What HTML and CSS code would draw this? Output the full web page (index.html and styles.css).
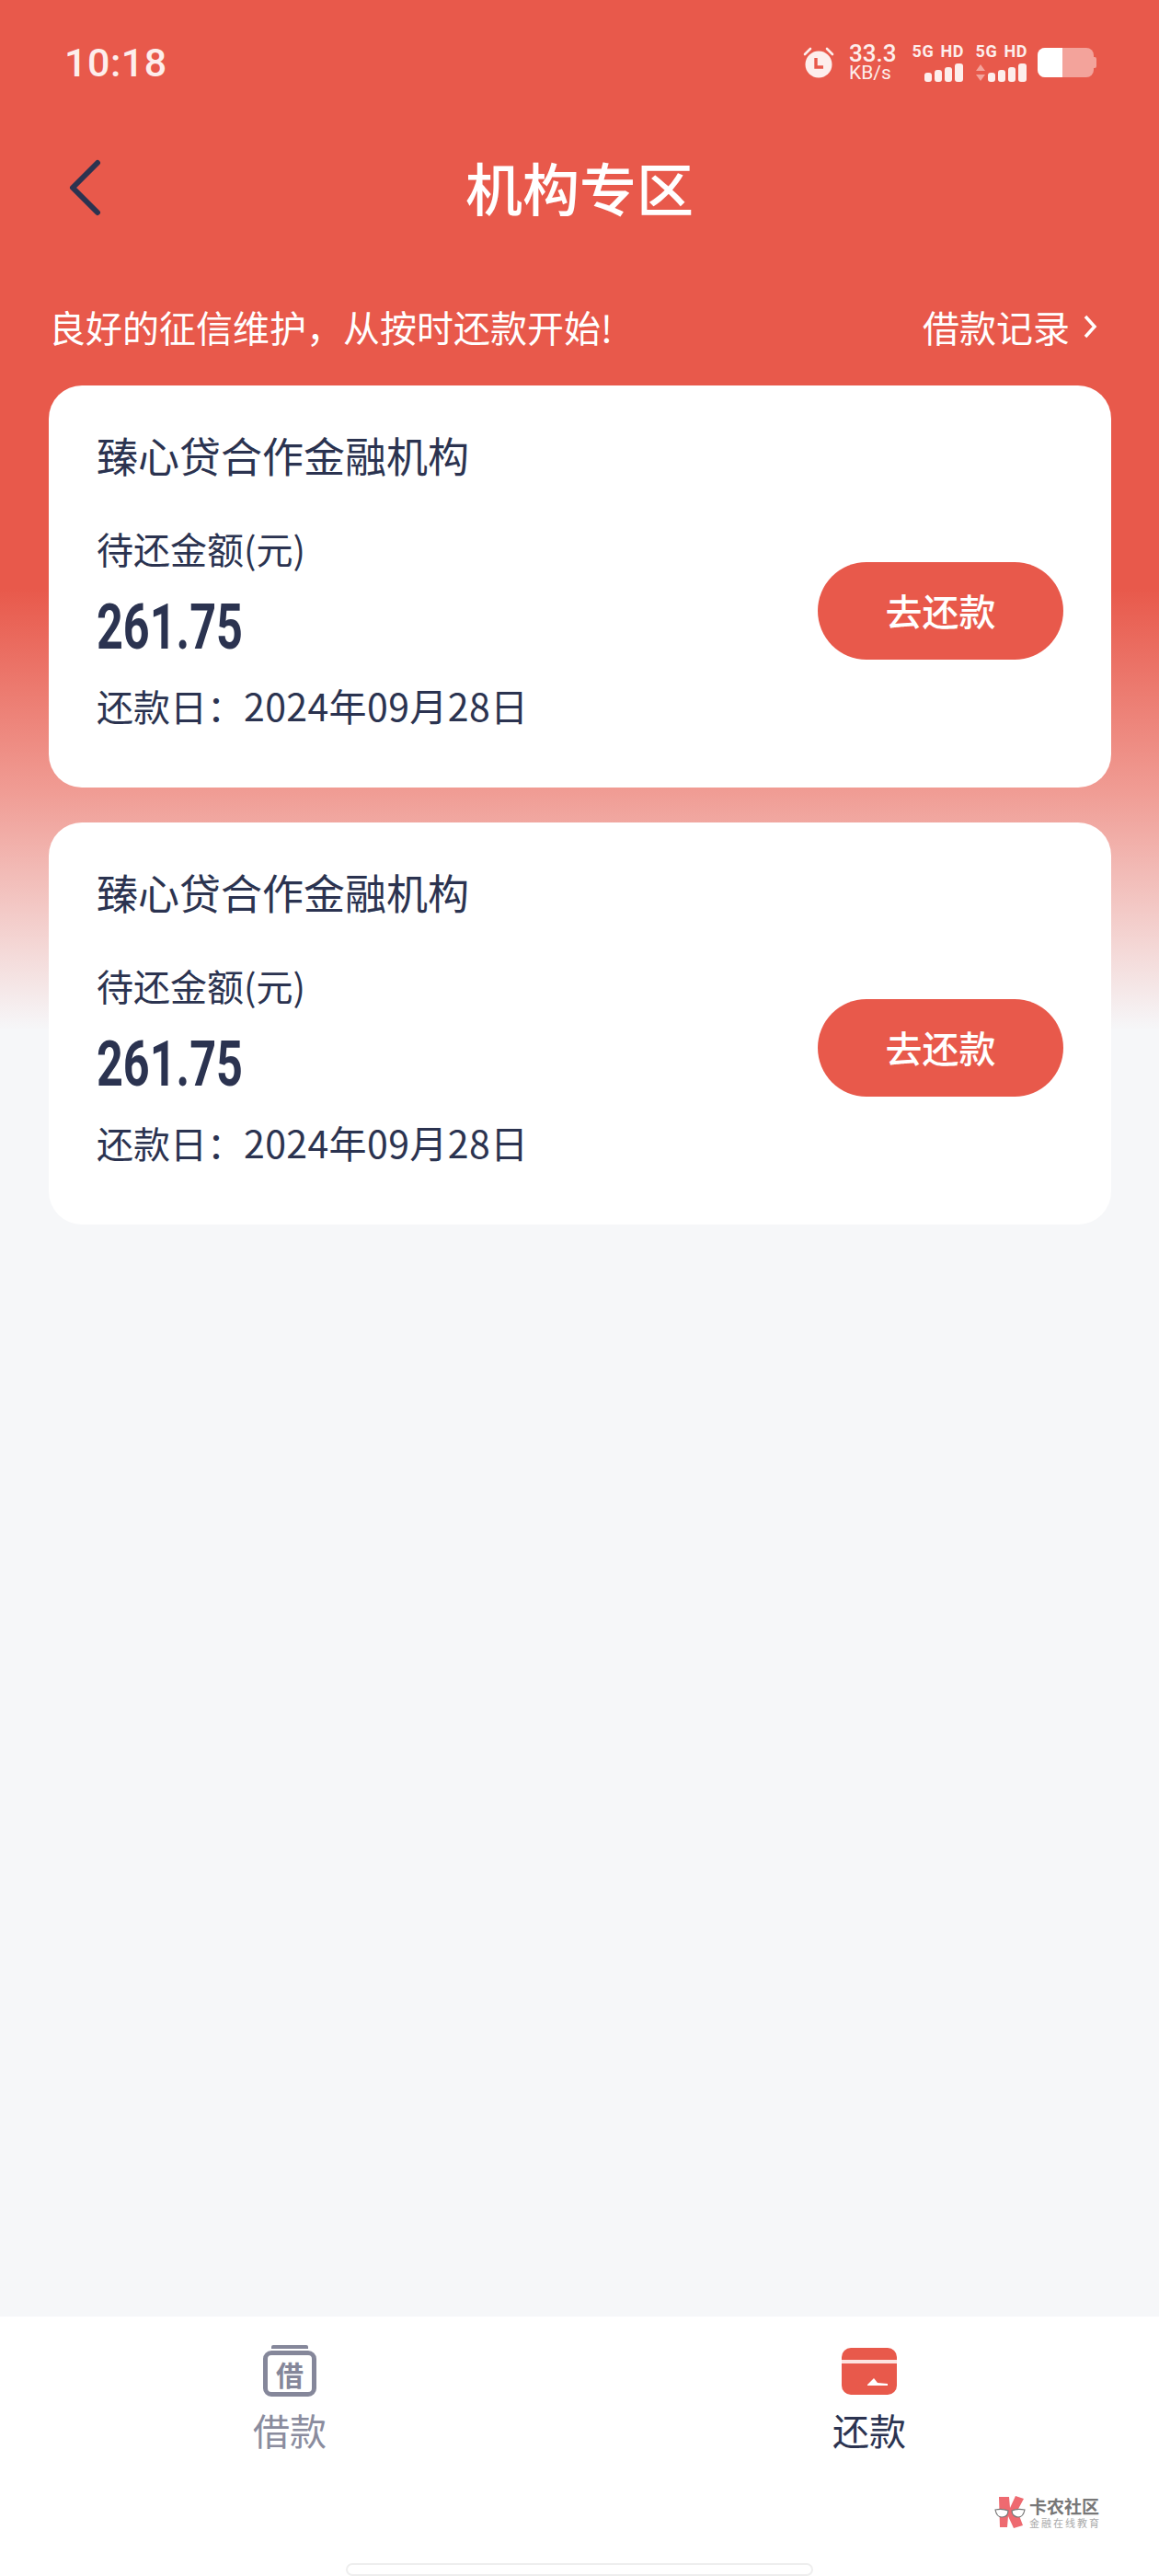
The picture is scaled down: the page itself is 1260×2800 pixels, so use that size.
FILE: index.html
```html
<!DOCTYPE html>
<html lang="zh-CN">
<head>
    <meta charset="UTF-8">
    <meta name="viewport" content="width=device-width, initial-scale=1.0">
    <title>机构专区</title>
    <link rel="stylesheet" href="styles.css">
</head>
<body>
    <div id="app">
        <div class="status-bar">
            <span class="clock">10:18</span>
            <div class="status-icons">
                <svg class="alarm" width="36" height="34" viewBox="0 0 36 34">
                    <circle cx="18" cy="19" r="14.5" fill="#fdeeec"/>
                    <path d="M3 8l6-6M33 8l-6-6" stroke="#fdeeec" stroke-width="2.6" stroke-linecap="round"/>
                    <path d="M15 12v10h8" fill="none" stroke="#e8594b" stroke-width="3.4"/>
                </svg>
                <div class="speed"><b>33.3</b><span>KB/s</span></div>
                <div class="signal">
                    <span class="net">5G HD</span>
                    <svg width="58" height="20" viewBox="0 0 58 20">
                        <g fill="#fdeeec"><rect x="15" y="10" width="8" height="10" rx="3"/><rect x="26" y="7" width="8" height="13" rx="3"/><rect x="37" y="4" width="8" height="16" rx="3"/><rect x="48" y="0" width="9" height="20" rx="3"/></g>
                    </svg>
                </div>
                <div class="signal">
                    <span class="net">5G HD</span>
                    <svg width="58" height="20" viewBox="0 0 58 20">
                        <path d="M2 8l5-7 5 7zM2 12l5 7 5-7z" fill="#f3a39b"/>
                        <g fill="#fdeeec"><rect x="15" y="10" width="8" height="10" rx="3"/><rect x="26" y="7" width="8" height="13" rx="3"/><rect x="37" y="4" width="8" height="16" rx="3"/><rect x="48" y="0" width="9" height="20" rx="3"/></g>
                    </svg>
                </div>
                <div class="battery"><div class="battery-fill"></div></div>
                <div class="battery-nub"></div>
            </div>
        </div>

        <div class="nav">
            <svg class="back" width="36" height="62" viewBox="0 0 36 62">
                <path d="M32 4L5 31l27 27" fill="none" stroke="#2b3350" stroke-width="6" stroke-linecap="round" stroke-linejoin="round"/>
            </svg>
            <h1>机构专区</h1>
        </div>

        <div class="notice">
            <span>良好的征信维护，从按时还款开始!</span>
            <span class="records">借款记录
                <svg width="16" height="28" viewBox="0 0 16 28">
                    <path d="M3 3l10 11L3 25" fill="none" stroke="#fff" stroke-width="3.5"/>
                </svg>
            </span>
        </div>

        <div class="card">
            <div class="card-title">臻心贷合作金融机构</div>
            <div class="card-row">
                <div class="card-info">
                    <div class="label">待还金额(元)</div>
                    <div class="amount">261.75</div>
                    <div class="due">还款日：<span class="due-date">2024年09月28日</span></div>
                </div>
                <button class="pay-btn">去还款</button>
            </div>
        </div>

        <div class="card">
            <div class="card-title">臻心贷合作金融机构</div>
            <div class="card-row">
                <div class="card-info">
                    <div class="label">待还金额(元)</div>
                    <div class="amount">261.75</div>
                    <div class="due">还款日：<span class="due-date">2024年09月28日</span></div>
                </div>
                <button class="pay-btn">去还款</button>
            </div>
        </div>

        <div class="tabbar">
            <div class="tab">
                <div class="borrow-lid"></div>
                <div class="borrow-box">借</div>
                <span class="tab-text">借款</span>
            </div>
            <div class="tab active">
                <svg class="tab-icon" width="60" height="52" viewBox="0 0 60 52">
                    <rect x="0" y="0" width="60" height="51" rx="10" fill="#e8594b"/>
                    <rect x="0" y="13" width="60" height="4" fill="#fde3df"/>
                    <path d="M28 40l7-7 4 5 11 1v2H28z" fill="#fff"/>
                </svg>
                <span class="tab-text">还款</span>
            </div>
        </div>

        <div class="watermark">
            <svg width="34" height="35" viewBox="0 0 34 35">
                <path d="M5 1l11 0 1 12 6-13 9 3-7 13 6 16-10 3-6-13-1 12H6z" fill="#ee6a70"/>
                <path d="M1 15c5-1 9-1 14 1 0 5-3 7-7 7-4 0-6-3-7-8zM19 16c4-2 9-2 14-1-1 5-3 8-7 8-4 0-7-3-7-7z" fill="#fff" stroke="#777" stroke-width="1.2"/>
            </svg>
            <div class="watermark-text">
                <span class="wm-name">卡农社区</span>
                <span class="wm-sub">金融在线教育</span>
            </div>
        </div>

        <div class="home-bar"></div>
    </div>
</body>
</html>
```

FILE: styles.css
```css
body {
    margin: 0;
    font-family: "Noto Sans CJK SC", "Noto Sans", sans-serif;
    color: #2b3350;
    background-color: #f6f7f9;
}
#app {
    position: relative;
    display: flex;
    flex-direction: column;
    width: 1260px;
    height: 2800px;
    overflow: hidden;
    background: linear-gradient(to bottom, #e8594b 0, #e8594b 640px, #f09c94 860px, #f6f7f9 1120px);
}
.status-bar {
    display: flex;
    justify-content: space-between;
    align-items: center;
    box-sizing: border-box;
    height: 110px;
    padding: 26px 68px 0 70px;
    flex-shrink: 0;
    color: #fdeeec;
}
.clock {
    font-family: Roboto, sans-serif;
    font-size: 43px;
    font-weight: 500;
    letter-spacing: 0.5px;
}
.status-icons {
    display: flex;
    align-items: center;
}
.alarm {
    margin-right: 15px;
}
.speed {
    display: flex;
    flex-direction: column;
    font-family: Roboto, sans-serif;
    width: 60px;
    margin-right: 7px;
}
.speed b {
    font-size: 26px;
    line-height: 22px;
    font-weight: 500;
}
.speed span {
    font-size: 21px;
    line-height: 20px;
}
.signal {
    display: flex;
    flex-direction: column;
    align-items: flex-end;
    width: 58px;
    margin-right: 11px;
}
.net {
    font-family: Roboto, sans-serif;
    font-size: 18px;
    font-weight: 700;
    line-height: 18px;
    margin-bottom: 4px;
    letter-spacing: 0.6px;
    word-spacing: 2px;
    white-space: nowrap;
}
.battery {
    width: 61px;
    height: 32px;
    border-radius: 8px;
    background-color: #f3a39b;
    overflow: hidden;
}
.battery-fill {
    width: 27px;
    height: 100%;
    background-color: #fff;
}
.battery-nub {
    width: 3px;
    height: 12px;
    border-radius: 0 2px 2px 0;
    background-color: #f3a39b;
}
.nav {
    position: relative;
    display: flex;
    justify-content: center;
    align-items: center;
    height: 188px;
    flex-shrink: 0;
}
.back {
    position: absolute;
    left: 74px;
    top: 63px;
}
h1 {
    margin: 0 0 2px;
    color: #fff;
    font-size: 62px;
    font-weight: 500;
    line-height: 80px;
}
.notice {
    display: flex;
    justify-content: space-between;
    align-items: center;
    height: 114px;
    margin-bottom: 7px;
    padding: 0 67px 0 53px;
    flex-shrink: 0;
    color: #fff;
    font-size: 40px;
}
.records {
    display: flex;
    align-items: center;
    gap: 14px;
}
.card {
    box-sizing: border-box;
    width: 1155px;
    height: 437px;
    margin: 0 0 38px 53px;
    padding: 48px 52px 0 52px;
    flex-shrink: 0;
    background-color: #fff;
    border-radius: 36px;
}
.card-title {
    font-size: 45px;
    line-height: 56px;
}
.card-row {
    display: flex;
    justify-content: space-between;
    align-items: flex-start;
    margin-top: 48px;
}
.label {
    font-size: 40px;
    line-height: 50px;
}
.amount {
    margin-top: 21px;
    font-family: Roboto, sans-serif;
    font-size: 68px;
    font-weight: 700;
    line-height: 80px;
    transform: scaleX(0.74);
    transform-origin: left;
}
.due {
    margin-top: 19px;
    font-size: 40px;
    line-height: 50px;
}
.due-date {
    font-size: 41px;
    letter-spacing: 0.4px;
}
.pay-btn {
    width: 267px;
    height: 106px;
    margin-top: 40px;
    padding-bottom: 3px;
    border: none;
    border-radius: 53px;
    background-color: #e8594b;
    color: #fff;
    font-family: inherit;
    font-size: 40px;
    font-weight: 500;
}
.tabbar {
    display: grid;
    grid-template-columns: 630px 630px;
    box-sizing: border-box;
    height: 282px;
    margin-top: auto;
    padding-top: 31px;
    flex-shrink: 0;
    background-color: #fff;
}
.tab {
    display: flex;
    flex-direction: column;
    align-items: center;
    color: #8a8c9e;
}
.tab.active {
    color: #2b3350;
}
.borrow-lid {
    width: 40px;
    height: 4px;
    border-radius: 2px 2px 0 0;
    background-color: #85879a;
}
.borrow-box {
    display: flex;
    justify-content: center;
    align-items: center;
    box-sizing: border-box;
    width: 58px;
    height: 50px;
    margin-top: 2px;
    border: 5px solid #85879a;
    border-radius: 9px;
    color: #85879a;
    font-size: 30px;
    font-weight: 700;
}
.tab-icon {
    margin-top: 3px;
    margin-bottom: 1px;
}
.tab-text {
    margin-top: 9px;
    font-size: 40px;
    line-height: 54px;
}
.watermark {
    position: absolute;
    left: 1081px;
    top: 2713px;
    display: flex;
    gap: 4px;
}
.watermark-text {
    display: flex;
    flex-direction: column;
}
.wm-name {
    color: #777;
    font-size: 19px;
    font-weight: 700;
    line-height: 22px;
    white-space: nowrap;
}
.wm-sub {
    color: #aaa;
    font-size: 11px;
    line-height: 14px;
    letter-spacing: 2px;
    white-space: nowrap;
}
.home-bar {
    position: absolute;
    left: 376px;
    top: 2786px;
    box-sizing: border-box;
    width: 508px;
    height: 14px;
    border: 2px solid #eeeeee;
    border-radius: 7px;
    background-color: #fff;
}
```
